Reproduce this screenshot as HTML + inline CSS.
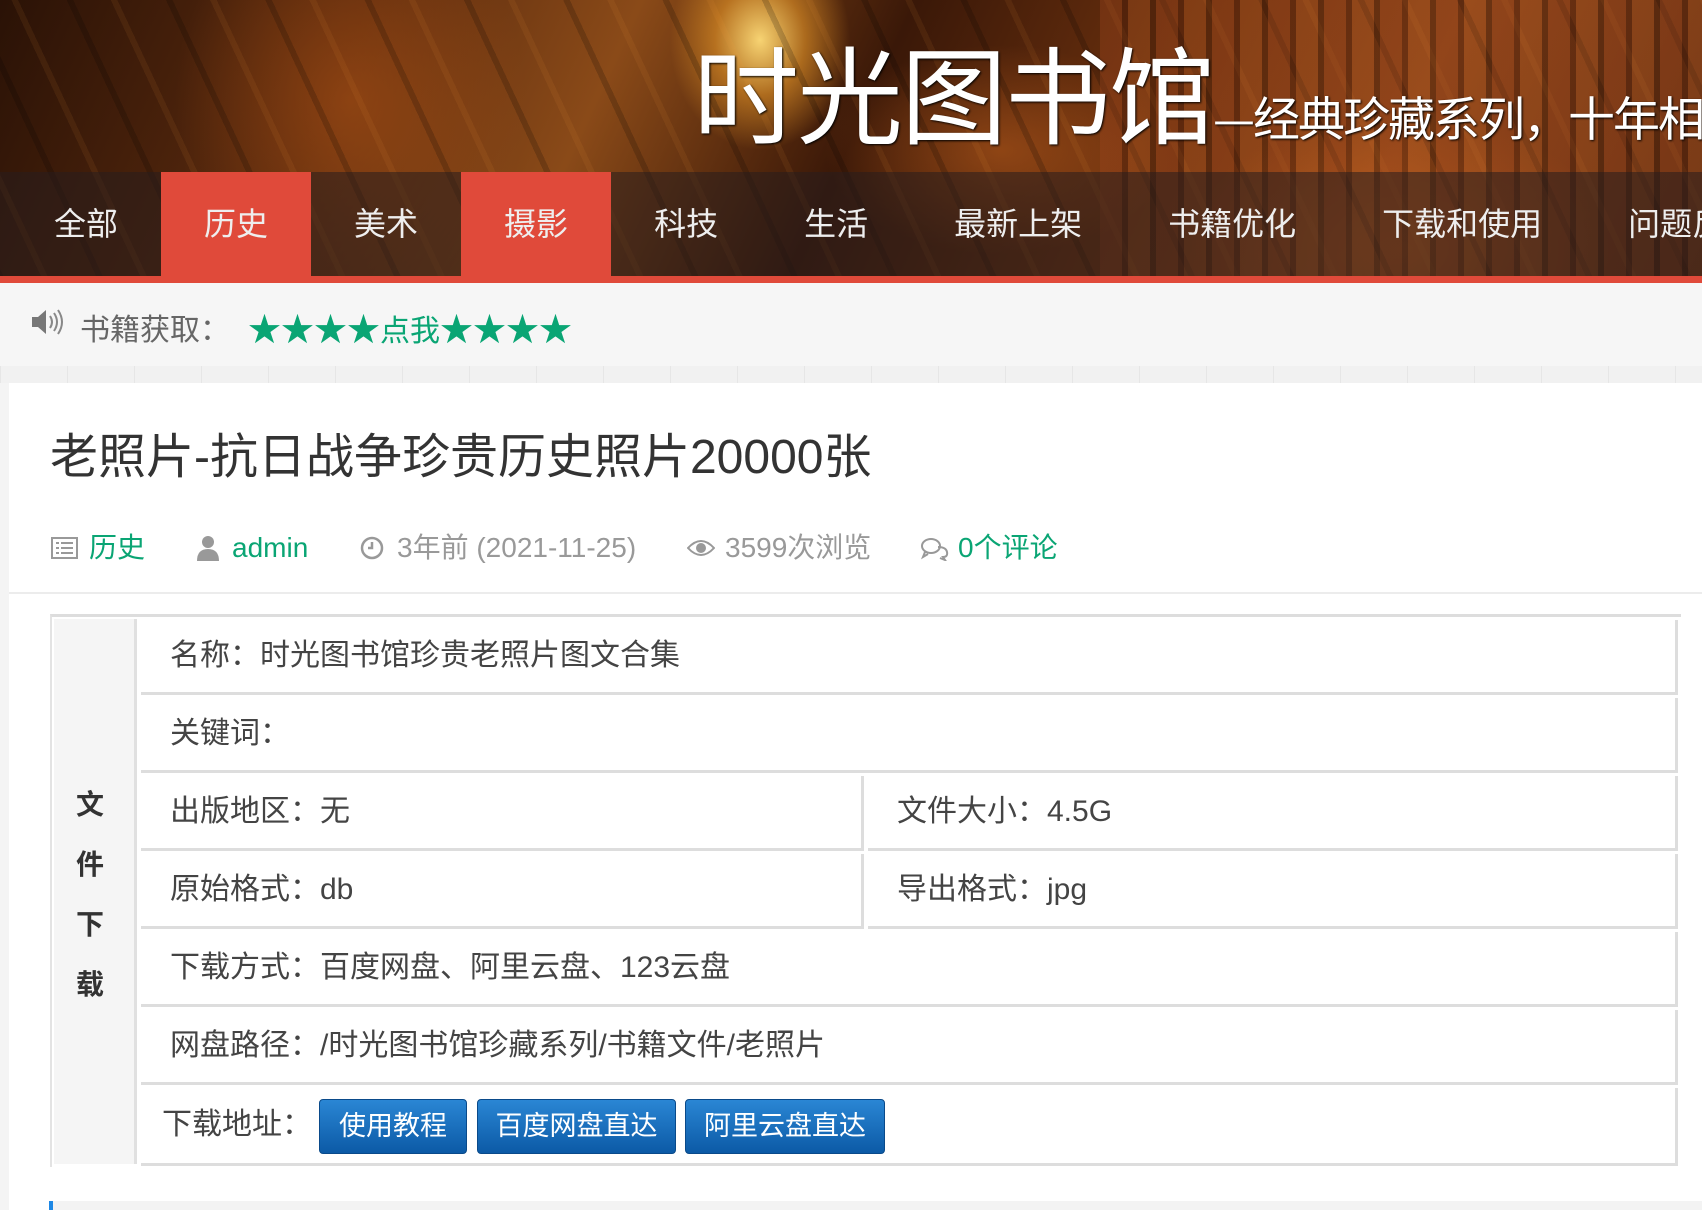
<!DOCTYPE html>
<html><head><meta charset="utf-8"><style>
*{margin:0;padding:0;box-sizing:border-box}
body{width:1702px;height:1210px;overflow:hidden;background:#f4f4f4;font-family:"Liberation Sans","Noto Sans CJK SC",sans-serif;position:relative}
.banner{position:absolute;left:0;top:0;width:1702px;height:283px;overflow:hidden;
background:
radial-gradient(ellipse 90px 110px at 760px 40px,rgba(255,220,120,.95),rgba(230,150,40,.6) 50%,transparent 100%),
radial-gradient(ellipse 300px 200px at 1400px 250px,rgba(220,110,30,.55),transparent 70%),
radial-gradient(ellipse 250px 150px at 1000px 150px,rgba(200,100,30,.5),transparent 70%),
radial-gradient(ellipse 250px 300px at 350px 100px,rgba(170,80,20,.6),transparent 70%),
linear-gradient(115deg,#2a1206 0%,#5a2a0e 20%,#8a4a18 35%,#3a1808 50%,#6a300e 65%,#8a4418 80%,#5a2a10 100%);}
.stripes{position:absolute;inset:0;background:repeating-linear-gradient(65deg,rgba(0,0,0,.18) 0 6px,transparent 6px 40px,rgba(255,160,60,.08) 40px 46px,transparent 46px 90px)}
.books{position:absolute;left:1100px;top:0;width:602px;height:283px;background:repeating-linear-gradient(90deg,rgba(160,70,30,.35) 0 22px,rgba(60,20,8,.35) 22px 28px,rgba(200,100,40,.25) 28px 50px,rgba(40,15,5,.3) 50px 56px)}
.title{position:absolute;left:693px;top:30px;color:#fff;font-size:106px;line-height:120px;letter-spacing:-2px;text-shadow:1px 1px 2px #000;font-family:"Noto Sans CJK SC",sans-serif;white-space:nowrap}
.title span{font-size:47px;letter-spacing:-2px}
.nav{position:absolute;left:0;top:172px;width:1702px;height:104px;background:rgba(40,30,30,.55);display:flex;padding-left:11px}
.nav a{display:block;color:#eee;font-size:32px;line-height:104px;padding:0 43px;height:104px;text-decoration:none;white-space:nowrap}
.nav a.on{background:#e04a3a}
.redline{position:absolute;left:0;top:276px;width:1702px;height:7px;background:#e04a3a}
.notice{position:absolute;left:0;top:283px;width:1702px;height:83px;background:#f6f6f6;font-size:30px;color:#666}
.notice .t{position:absolute;left:80px;top:22px}
.notice .g{position:absolute;left:248px;top:20px;color:#0aa574;white-space:nowrap}
.notice .g b{font-weight:normal;font-size:33px}
.grid{position:absolute;left:0;top:366px;width:1702px;height:17px;background:repeating-linear-gradient(90deg,#e6e6e6 0 1px,#f1f1f1 1px 67px)}
.card{position:absolute;left:9px;top:383px;width:1693px;height:827px;background:#fff}
h1{position:absolute;left:50px;top:428px;font-size:48px;font-weight:normal;color:#333;white-space:nowrap;line-height:60px}
.meta{position:absolute;top:530px;font-size:28px;line-height:36px;white-space:nowrap}
.gr{color:#0aa574}.gy{color:#999}
.sep{position:absolute;left:9px;top:592px;width:1693px;height:2px;background:#ececec}
.tbl{position:absolute;left:50px;top:614px;width:1631px;height:553px;border-top:3px solid #ddd;border-left:2px solid #e3e3e3}
.lab{position:absolute;left:54px;top:619px;width:83px;height:545px;background:#f5f5f5;border-right:3px solid #e0e0e0;font-weight:bold;font-size:28px;color:#333}
.lab div{position:absolute;left:22px}
.cell{position:absolute;border-right:3px solid #ddd;border-bottom:3px solid #ddd;font-size:30px;color:#444;line-height:72px;padding-left:29px;white-space:nowrap}
.btn{position:absolute;top:1099px;height:55px;border:1px solid #0a4a8a;border-radius:4px;background:linear-gradient(#2a86d4,#0c5aa6);color:#fff;font-size:27px;line-height:53px;text-align:center}
</style></head><body>
<div class="banner"><div class="stripes"></div><div class="books"></div>
<div class="title">时光图书馆<span>—经典珍藏系列，十年相伴</span></div></div>
<div class="nav"><a>全部</a><a class="on">历史</a><a>美术</a><a class="on">摄影</a><a>科技</a><a>生活</a><a>最新上架</a><a>书籍优化</a><a>下载和使用</a><a>问题反馈</a></div>
<div class="redline"></div>
<div class="notice">
<svg style="position:absolute;left:30px;top:24px" width="34" height="30" viewBox="0 0 34 30"><path d="M2 10h6l8-7v24l-8-7H2z" fill="#777"/><path d="M20 9q4 6 0 12M24 6q6 9 0 18M28 3q8 12 0 24" stroke="#888" stroke-width="2" fill="none"/></svg>
<span class="t">书籍获取：</span><span class="g"><b>★★★★</b>点我<b>★★★★</b></span></div>
<div class="grid"></div>
<div class="card"></div>
<h1>老照片-抗日战争珍贵历史照片20000张</h1>
<svg style="position:absolute;left:51px;top:537px" width="27" height="22" viewBox="0 0 27 22"><rect x="1" y="1" width="25" height="20" fill="none" stroke="#999" stroke-width="2"/><path d="M5 6h3M10 6h12M5 11h3M10 11h12M5 16h3M10 16h12" stroke="#999" stroke-width="2"/></svg>
<div class="meta gr" style="left:89px">历史</div>
<svg style="position:absolute;left:197px;top:535px" width="22" height="26" viewBox="0 0 22 26"><circle cx="11" cy="7" r="6" fill="#999"/><path d="M0 26q0-12 11-12t11 12z" fill="#999"/></svg>
<div class="meta gr" style="left:232px">admin</div>
<svg style="position:absolute;left:360px;top:536px" width="24" height="24" viewBox="0 0 24 24"><circle cx="12" cy="12" r="10" fill="none" stroke="#999" stroke-width="2.5"/><path d="M12 6v6h-4" stroke="#999" stroke-width="2.5" fill="none"/></svg>
<div class="meta gy" style="left:397px">3年前 (2021-11-25)</div>
<svg style="position:absolute;left:687px;top:539px" width="28" height="18" viewBox="0 0 28 18"><path d="M1 9q13-14 26 0q-13 14-26 0z" fill="none" stroke="#999" stroke-width="2"/><circle cx="14" cy="9" r="5" fill="#999"/></svg>
<div class="meta gy" style="left:725px">3599次浏览</div>
<svg style="position:absolute;left:920px;top:537px" width="30" height="24" viewBox="0 0 30 24"><ellipse cx="11" cy="9" rx="9" ry="7" fill="none" stroke="#999" stroke-width="2"/><path d="M5 15l-2 5 5-3M18 10q8 0 9 5t-4 5l2 3-5-2" fill="none" stroke="#999" stroke-width="2"/></svg>
<div class="meta gr" style="left:958px">0个评论</div>
<div class="sep"></div>
<div class="tbl"></div>
<div class="lab"><div style="top:164px">文</div><div style="top:224px">件</div><div style="top:284px">下</div><div style="top:344px">载</div></div>
<div class="cell" style="left:141px;top:620px;width:1537px;height:75px">名称：时光图书馆珍贵老照片图文合集</div>
<div class="cell" style="left:141px;top:698px;width:1537px;height:75px">关键词：</div>
<div class="cell" style="left:141px;top:776px;width:723px;height:75px">出版地区：无</div>
<div class="cell" style="left:868px;top:776px;width:810px;height:75px">文件大小：4.5G</div>
<div class="cell" style="left:141px;top:854px;width:723px;height:75px">原始格式：db</div>
<div class="cell" style="left:868px;top:854px;width:810px;height:75px">导出格式：jpg</div>
<div class="cell" style="left:141px;top:932px;width:1537px;height:75px">下载方式：百度网盘、阿里云盘、123云盘</div>
<div class="cell" style="left:141px;top:1010px;width:1537px;height:75px">网盘路径：/时光图书馆珍藏系列/书籍文件/老照片</div>
<div class="cell" style="left:141px;top:1088px;width:1537px;height:78px;padding-left:21px;line-height:74px">下载地址：</div>
<div class="btn" style="left:319px;width:148px">使用教程</div>
<div class="btn" style="left:477px;width:199px">百度网盘直达</div>
<div class="btn" style="left:685px;width:200px">阿里云盘直达</div>
<div style="position:absolute;left:49px;top:1201px;width:4px;height:9px;background:#1e88e5"></div>
<div style="position:absolute;left:53px;top:1201px;width:1649px;height:9px;background:#f3f3f3"></div>
</body></html>
